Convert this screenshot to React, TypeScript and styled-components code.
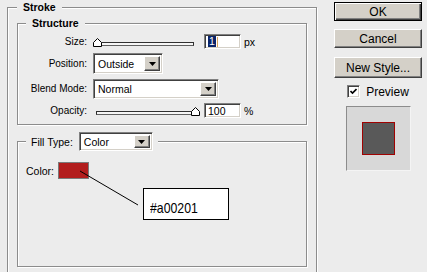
import React from "react";
import styled, { createGlobalStyle, css } from "styled-components";

const GlobalStyle = createGlobalStyle`
  html, body {
    margin: 0;
    padding: 0;
    background: #ececec;
    overflow: hidden;
    font-family: "Liberation Sans", Arial, sans-serif;
    font-size: 10px;
    color: #000;
  }
`;

const sunken = css`
  border: 1px solid;
  border-color: #808080 #ffffff #ffffff #808080;
  box-shadow: inset 1px 1px 0 #404040, inset -1px -1px 0 #d4d0c8;
  box-sizing: border-box;
`;

const raised = css`
  border: 1px solid;
  border-color: #ffffff #404040 #404040 #ffffff;
  box-shadow: inset -1px -1px 0 #808080;
  box-sizing: border-box;
  background: #d4d0c8;
`;

const etched = css`
  border: 1px solid #8c8c8c;
  box-shadow: 1px 1px 0 #ffffff, inset 1px 1px 0 #ffffff;
`;

const Page = styled.div`
  display: flex;
  align-items: flex-start;
  height: 272px;
  overflow: hidden;
`;

const StrokeGroup = styled.fieldset`
  ${etched};
  margin: 1px 0 0 7px;
  padding: 0 9px;
  width: 310px;
  height: 290px;
  box-sizing: border-box;
  min-inline-size: 0;
`;

const Legend = styled.legend<{ $pad?: number }>`
  padding: 0 ${({ $pad }) => $pad ?? 6}px;
  font-weight: bold;
  font-size: 10.5px;
  line-height: 13px;
  background: #ececec;
`;

const InnerGroup = styled.fieldset`
  ${etched};
  margin: 3px 0 0 0;
  padding: 0 8px 6px 8px;
  box-sizing: border-box;
  min-inline-size: 0;
`;

const StructureGrid = styled.div`
  display: grid;
  grid-template-columns: 61px auto;
  grid-template-rows: 15px 21px 21px 15px;
  column-gap: 6px;
  row-gap: 4px;
  padding-top: 4px;
  align-items: center;
`;

const Label = styled.div`
  text-align: right;
  white-space: nowrap;
  line-height: 12px;
`;

const Controls = styled.div`
  display: flex;
  align-items: center;
  height: 100%;
`;

const SliderBox = styled.div`
  position: relative;
  width: 107px;
  height: 9px;
  margin-right: 4px;
  align-self: flex-end;
  margin-bottom: 2px;
`;

const Track = styled.div`
  position: absolute;
  left: 3px;
  right: 6px;
  top: 4px;
  height: 4px;
  box-sizing: border-box;
  border: 1px solid #303030;
  border-bottom-color: #606060;
  background: #f6f6f6;
`;

const Thumb = styled.svg<{ $end?: boolean }>`
  position: absolute;
  top: 0;
  ${({ $end }) => ($end ? "right: 0;" : "left: 0;")}
`;

const TextField = styled.div`
  ${sunken};
  width: 37px;
  height: 15px;
  background: #fff;
  display: flex;
  align-items: center;
  padding-left: 3px;
  font-size: 10.5px;
`;

const Selected = styled.span`
  background: #0a246a;
  color: #fff;
  padding: 0 1px;
  line-height: 11px;
`;

const Caret = styled.span`
  width: 1px;
  height: 10px;
  background: #d6a15c;
  margin-left: 1px;
`;

const Unit = styled.span`
  margin-left: 3px;
  font-size: 10.5px;
`;

const SelectBox = styled.div<{ $w: number; $h: number }>`
  ${sunken};
  width: ${({ $w }) => $w}px;
  height: ${({ $h }) => $h}px;
  background: #fff;
  display: flex;
  align-items: stretch;
  padding: 2px;
`;

const SelectText = styled.div`
  flex: 1;
  display: flex;
  align-items: center;
  padding-left: 2px;
  font-size: 10.5px;
`;

const DropButton = styled.div`
  ${raised};
  width: 16px;
  display: flex;
  align-items: center;
  justify-content: center;
`;

const Select = ({ value, w, h }: { value: string; w: number; h: number }) => (
  <SelectBox $w={w} $h={h}>
    <SelectText>{value}</SelectText>
    <DropButton>
      <svg width="7" height="4" viewBox="0 0 7 4">
        <polygon points="0,0 7,0 3.5,4" fill="#000" />
      </svg>
    </DropButton>
  </SelectBox>
);

const Slider = ({ end }: { end?: boolean }) => (
  <SliderBox>
    <Track />
    <Thumb $end={end} width="9" height="9" viewBox="0 0 9 9">
      <polygon points="0.5,8.5 0.5,4.5 4.5,0.5 8.5,4.5 8.5,8.5" fill="#fff" stroke="#000" />
    </Thumb>
  </SliderBox>
);

const FillGroup = styled(InnerGroup)`
  margin-top: 7px;
  height: 135px;
`;

const FillLegend = styled.legend`
  padding: 0 5px;
  display: flex;
  align-items: center;
  gap: 6px;
  background: #ececec;
`;

const LegendLabel = styled.span`
  font-size: 10.5px;
`;

const FillBody = styled.div`
  position: relative;
  padding-top: 11px;
`;

const ColorRow = styled.div`
  display: flex;
  align-items: center;
  gap: 4px;
  font-size: 10.5px;
`;

const Swatch = styled.div<{ $color: string }>`
  width: 31px;
  height: 17px;
  box-sizing: border-box;
  border: 1px solid #7a7a7a;
  background: ${({ $color }) => $color};
`;

const CalloutLine = styled.svg`
  position: absolute;
  left: 0;
  top: 0;
  pointer-events: none;
`;

const Callout = styled.div`
  position: absolute;
  left: 117px;
  top: 37px;
  width: 86px;
  height: 32px;
  box-sizing: border-box;
  border: 1px solid #000;
  background: #fff;
  padding: 10px 0 0 6px;
`;

const CalloutText = styled.div`
  font-size: 15px;
  line-height: 17px;
  transform: scaleX(0.82);
  transform-origin: left center;
  white-space: nowrap;
`;

const SideColumn = styled.div`
  margin-left: 17px;
  width: 88px;
  padding-top: 2px;
  display: flex;
  flex-direction: column;
  align-items: center;
`;

const Button = styled.div<{ $default?: boolean; $h?: number; $mt?: number }>`
  ${raised};
  width: 88px;
  height: ${({ $h }) => $h ?? 19}px;
  margin-top: ${({ $mt }) => $mt ?? 0}px;
  display: flex;
  align-items: center;
  justify-content: center;
  font-size: 12px;
  ${({ $default }) =>
    $default &&
    css`
      border: 1px solid #000;
      box-shadow: inset 1px 1px 0 #fff, inset -1px -1px 0 #404040, inset -2px -2px 0 #808080;
    `}
`;

const CheckRow = styled.div`
  display: flex;
  align-items: center;
  gap: 6px;
  margin-top: 7px;
  font-size: 12px;
  height: 13px;
`;

const CheckBox = styled.div`
  ${sunken};
  width: 13px;
  height: 13px;
  background: #fff;
  display: flex;
  align-items: center;
  justify-content: center;
`;

const PreviewFrame = styled.div`
  margin-top: 8px;
  width: 65px;
  height: 65px;
  box-sizing: border-box;
  background: #d8d8d8;
  border: 1px solid;
  border-color: #8c8c8c #f4f4f4 #f4f4f4 #8c8c8c;
  display: flex;
  align-items: center;
  justify-content: center;
`;

const PreviewSquare = styled.div`
  width: 33px;
  height: 33px;
  box-sizing: border-box;
  background: #595959;
  border: 1px solid #a00201;
`;

export default function App() {
  return (
    <>
      <GlobalStyle />
      <Page>
        <StrokeGroup>
          <Legend>Stroke</Legend>
          <InnerGroup>
            <Legend>Structure</Legend>
            <StructureGrid>
              <Label>Size:</Label>
              <Controls>
                <Slider />
                <TextField>
                  <Selected>1</Selected>
                  <Caret />
                </TextField>
                <Unit>px</Unit>
              </Controls>

              <Label>Position:</Label>
              <Controls>
                <Select value="Outside" w={70} h={21} />
              </Controls>

              <Label>Blend Mode:</Label>
              <Controls>
                <Select value="Normal" w={126} h={20} />
              </Controls>

              <Label>Opacity:</Label>
              <Controls>
                <Slider end />
                <TextField>100</TextField>
                <Unit>%</Unit>
              </Controls>
            </StructureGrid>
          </InnerGroup>

          <FillGroup>
            <FillLegend>
              <LegendLabel>Fill Type:</LegendLabel>
              <Select value="Color" w={74} h={19} />
            </FillLegend>
            <FillBody>
              <ColorRow>
                Color:
                <Swatch $color="#b21d1d" />
              </ColorRow>
              <CalloutLine width="130" height="60">
                <line x1="54" y1="20" x2="112" y2="54" stroke="#000" strokeWidth="1" />
              </CalloutLine>
              <Callout>
                <CalloutText>#a00201</CalloutText>
              </Callout>
            </FillBody>
          </FillGroup>
        </StrokeGroup>

        <SideColumn>
          <Button $default>OK</Button>
          <Button $mt={8}>Cancel</Button>
          <Button $mt={9} $h={21}>New Style...</Button>
          <CheckRow>
            <CheckBox>
              <svg width="7" height="7" viewBox="0 0 7 7">
                <path d="M0.5 3 L2.5 5 L6.5 1" fill="none" stroke="#000" strokeWidth="1.6" />
              </svg>
            </CheckBox>
            Preview
          </CheckRow>
          <PreviewFrame>
            <PreviewSquare />
          </PreviewFrame>
        </SideColumn>
      </Page>
    </>
  );
}
